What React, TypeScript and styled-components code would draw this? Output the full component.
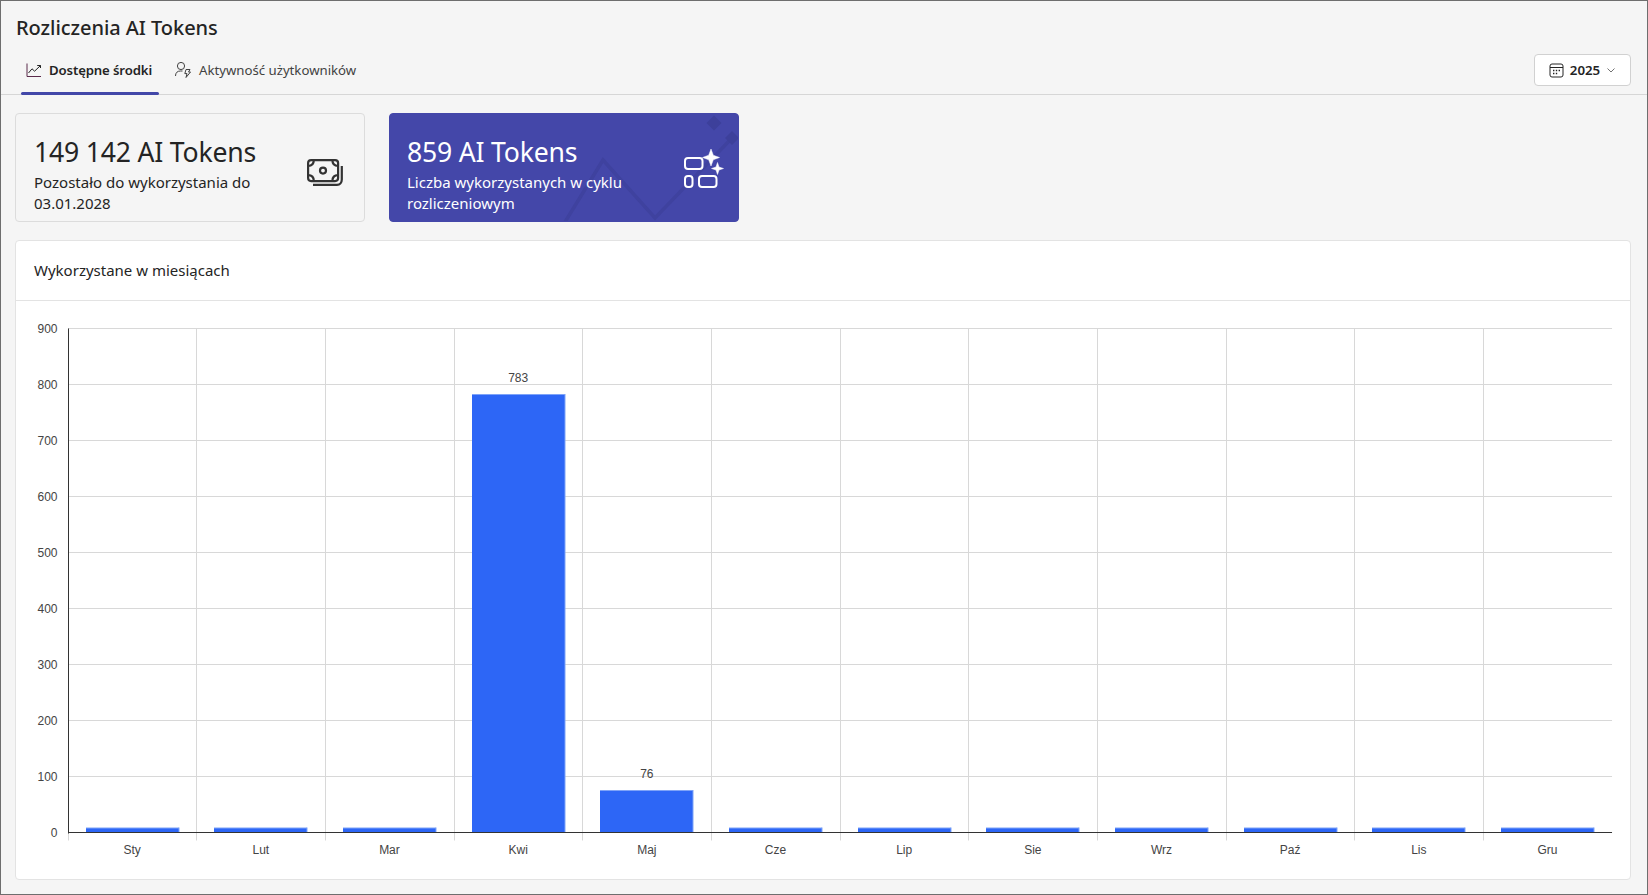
import React from "react";
import styled, { createGlobalStyle } from "styled-components";

const Global = createGlobalStyle`
  html, body { margin: 0; padding: 0; background: #f5f5f5; }
  * { box-sizing: border-box; }
`;

const FONT = `"Noto Sans", "Open Sans", sans-serif`;

const Page = styled.div`
  width: 1648px;
  height: 895px;
  border: 1px solid #6e6e6e;
  background: #f5f5f5;
  font-family: ${FONT};
  color: #242424;
  display: flex;
  flex-direction: column;
  overflow: hidden;
`;
const Header = styled.header`
  height: 94px;
  flex: none;
  border-bottom: 1px solid #d6d6d6;
  display: flex;
  flex-direction: column;
`;
const Title = styled.h1`
  margin: 0;
  padding: 13px 0 0 15px;
  height: 49px;
  font-size: 20px;
  line-height: 28px;
  font-weight: 500;
  letter-spacing: -0.05px;
`;
const TabRow = styled.div`
  flex: 1;
  display: flex;
  align-items: stretch;
  padding: 0 16px 0 20px;
`;
const Tab = styled.div<{ $active?: boolean }>`
  position: relative;
  display: flex;
  align-items: center;
  gap: 7px;
  padding: 0 ${(p) => (p.$active ? 7 : 6)}px 4px 5px;
  margin-right: 10px;
  font-size: 13.2px;
  letter-spacing: ${(p) => (p.$active ? "-0.13px" : "0")};
  font-weight: ${(p) => (p.$active ? 600 : 400)};
  color: ${(p) => (p.$active ? "#242424" : "#424242")};
  &::after {
    content: "";
    display: ${(p) => (p.$active ? "block" : "none")};
    position: absolute;
    left: 0;
    right: 0;
    bottom: -1px;
    height: 3px;
    border-radius: 2px;
    background: #4247a8;
  }
`;
const YearButton = styled.div`
  margin: 4px 0 0 auto;
  width: 97px;
  height: 32px;
  background: #fff;
  border: 1px solid #d1d1d1;
  border-radius: 4px;
  display: flex;
  align-items: center;
  justify-content: center;
  gap: 6px;
  font-size: 13.3px;
  font-weight: 600;
`;
const Content = styled.main`
  flex: 1;
  padding: 18px 16px 14px 14px;
  display: flex;
  flex-direction: column;
  gap: 18px;
  min-height: 0;
`;
const Cards = styled.section`
  display: flex;
  gap: 24px;
`;
const Card = styled.div<{ $primary?: boolean }>`
  position: relative;
  width: 350px;
  height: 109px;
  padding: 22px 18px 0 ${(p) => (p.$primary ? 17 : 18)}px;
  border-radius: 4px;
  border: 1px solid ${(p) => (p.$primary ? "#4447a9" : "#dcdcdc")};
  background: ${(p) => (p.$primary ? "#4447a9" : "#f5f5f5")};
  color: ${(p) => (p.$primary ? "#fff" : "#242424")};
  overflow: hidden;
  display: flex;
  align-items: flex-start;
`;
const Decoration = styled.svg`
  position: absolute;
  inset: 0;
  width: 100%;
  height: 100%;
`;
const CardText = styled.div`
  position: relative;
  width: 262px;
`;
const CardValue = styled.div`
  font-size: 26.6px;
  line-height: 32px;
  letter-spacing: -0.2px;
`;
const CardLabel = styled.div`
  margin-top: 4px;
  font-size: 15px;
  line-height: 21px;
`;
const CardIcon = styled.svg<{ $top: number; $right: number }>`
  position: absolute;
  top: ${(p) => p.$top}px;
  right: ${(p) => p.$right}px;
`;
const ChartCard = styled.section`
  flex: 1;
  min-height: 0;
  background: #fff;
  border: 1px solid #e3e3e3;
  border-radius: 4px;
  display: flex;
  flex-direction: column;
`;
const ChartHeader = styled.div`
  height: 60px;
  flex: none;
  padding: 0 18px 2px;
  display: flex;
  align-items: center;
  font-size: 15px;
  border-bottom: 1px solid #e3e3e3;
`;
const ChartArea = styled.div`
  flex: 1;
  min-height: 0;
`;
const Plot = styled.svg`
  display: block;
  font-family: "Liberation Sans", Arial, sans-serif;
  font-size: 12px;
  fill: #444;
`;

const months = ["Sty", "Lut", "Mar", "Kwi", "Maj", "Cze", "Lip", "Sie", "Wrz", "Paź", "Lis", "Gru"];
const values: Record<string, number> = { Kwi: 783, Maj: 76 };

// Plot geometry in the chart card's own coordinates.
const X0 = 52;
const STEP = 128.67;
const BASE = 531.5;
const UNIT = 56 / 100;
const GRID = "#d8d8d8";

function Chart() {
  const ticks = [0, 100, 200, 300, 400, 500, 600, 700, 800, 900];
  const right = X0 + STEP * 12;
  return (
    <Plot width="1612" height="578" viewBox="0 0 1612 578">
      {ticks.map((t) => {
        const y = BASE - Math.round(t * UNIT);
        return (
          <g key={t}>
            {t > 0 && <line x1={X0} x2={right} y1={y} y2={y} stroke={GRID} />}
            <text x={X0 - 10.5} y={y + 4} textAnchor="end">{t}</text>
          </g>
        );
      })}
      {months.map((_, i) => {
        const x = Math.floor(X0 + STEP * i) + 0.5;
        return <line key={i} x1={x} x2={x} y1={BASE - 504} y2={BASE + 8} stroke={GRID} />;
      })}
      {months.map((m, i) => {
        const v = values[m];
        const h = v ? Math.floor(v * UNIT) : 4.5;
        const x = Math.floor(X0 + STEP * i + 18);
        const cx = X0 + STEP * i + STEP / 2 - 0.2;
        return (
          <g key={m}>
            <rect x={x} y={BASE - h} width={93} height={h} fill="#2d66f6" />
            <rect x={x} y={BASE - h - 0.5} width={93} height={1} fill="#7ea3f8" />
            <rect x={x + 92.5} y={BASE - h - 0.5} width={1} height={h} fill="#7ea3f8" />
            {v && <text x={cx} y={BASE - h - 13} textAnchor="middle">{v}</text>}
            <text x={cx} y={BASE + 21} textAnchor="middle">{m}</text>
          </g>
        );
      })}
      <line x1={X0 + 0.5} x2={X0 + 0.5} y1={BASE - 504} y2={BASE + 1} stroke="#333" />
      <line x1={X0} x2={right} y1={BASE} y2={BASE} stroke="#333" />
    </Plot>
  );
}

export default function App() {
  return (
    <Page>
      <Global />
      <Header>
        <Title>Rozliczenia AI Tokens</Title>
        <TabRow>
          <Tab $active>
            <svg width="16" height="16" viewBox="0 0 16 16" fill="none" stroke="#242424" strokeWidth="1">
              <path d="M1 1.500V14.500H15" stroke="#5a2a4a" />
              <path d="M2.500 11L6 6.800L8.600 9.200L14.500 3.500M11.200 3.500H14.500V6" strokeLinejoin="round" />
            </svg>
            Dostępne środki
          </Tab>
          <Tab>
            <svg width="18" height="18" viewBox="0 0 18 18" fill="none" stroke="#424242" strokeWidth="1">
              <circle cx="7" cy="5" r="3.600" />
              <path d="M1.500 15C1.500 11.500 3.500 10 6.500 10H8.500" />
              <path d="M12 8.500H16L14.500 11H16.500L12 16.500L13 12.600H10.800Z" strokeLinejoin="round" />
            </svg>
            Aktywność użytkowników
          </Tab>
          <YearButton>
            <svg width="15" height="15" viewBox="0 0 15 15" fill="none" stroke="#242424" strokeWidth="1">
              <rect x="1" y="1" width="13" height="13" rx="2" />
              <path d="M1 4.500H14" />
              <path d="M4 7.500h1.400M6.800 7.500h1.400M9.600 7.500h1.400M4 10.500h1.400M6.800 10.500h1.400" strokeWidth="1.400" />
            </svg>
            2025
            <svg width="10" height="10" viewBox="0 0 10 10" fill="none" stroke="#616161" strokeWidth="0.9">
              <path d="M1.500 3.500L5 7L8.500 3.500" />
            </svg>
          </YearButton>
        </TabRow>
      </Header>
      <Content>
        <Cards>
          <Card>
            <CardText>
              <CardValue>149 142 AI Tokens</CardValue>
              <CardLabel>Pozostało do wykorzystania do 03.01.2028</CardLabel>
            </CardText>
            <CardIcon $top={45} $right={21} width="36" height="27" viewBox="0 0 36 27" fill="none" stroke="#333" strokeWidth="2.200">
              <rect x="1.100" y="1.100" width="30" height="21" rx="3" />
              <circle cx="16" cy="11.600" r="3" />
              <path d="M1.100 7C4.500 7 6.800 5 6.800 1.100M31.100 7C27.700 7 25.400 5 25.400 1.100M1.100 16.200C4.500 16.200 6.800 18.200 6.800 22.100M31.100 16.200C27.700 16.200 25.400 18.200 25.400 22.100" />
              <path d="M34.800 7V20.500C34.800 23.500 33 25.800 30 25.800H6" />
            </CardIcon>
          </Card>
          <Card $primary>
            <Decoration viewBox="0 0 348 107" fill="none">
              <path d="M175 108L213 46L265 104L342 24" stroke="#3f429f" strokeWidth="3.500" />
              <path d="M324 1.500L331.500 9L324 16.500L316.500 9Z M342 17L349 24L342 31L335 24Z" fill="#3d409b" />
            </Decoration>
            <CardText>
              <CardValue>859 AI Tokens</CardValue>
              <CardLabel>Liczba wykorzystanych w cyklu rozliczeniowym</CardLabel>
            </CardText>
            <CardIcon $top={35} $right={14} width="40" height="40" viewBox="0 0 40 40" fill="none" stroke="#fff" strokeWidth="2">
              <rect x="1" y="9" width="17.500" height="11" rx="3" />
              <rect x="1" y="27" width="7.500" height="11" rx="3" />
              <rect x="15" y="27" width="17.500" height="11" rx="3" />
              <path d="M27 0L29.300 6.200L35.500 8.500L29.300 10.800L27 17L24.700 10.800L18.500 8.500L24.700 6.200Z" fill="#fff" strokeWidth="0.500" />
              <path d="M33.500 13.500L35 18L39.500 19.500L35 21L33.500 25.500L32 21L27.500 19.500L32 18Z" fill="#fff" strokeWidth="0.500" />
            </CardIcon>
          </Card>
        </Cards>
        <ChartCard>
          <ChartHeader>Wykorzystane w miesiącach</ChartHeader>
          <ChartArea>
            <Chart />
          </ChartArea>
        </ChartCard>
      </Content>
    </Page>
  );
}
